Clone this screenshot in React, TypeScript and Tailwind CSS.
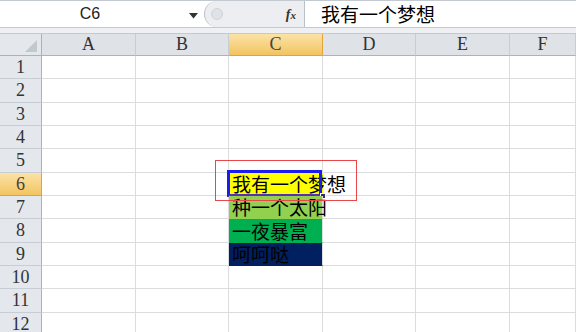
import React from "react";

const cols = ["A", "B", "C", "D", "E", "F"];
const colW = ["w-[94px]", "w-[93px]", "w-[94px]", "w-[93px]", "w-[94px]", "flex-1"];
// row heights incl. bottom gridline, screenshot was zoomed so they alternate 23/24
const rowH = [
  "h-[23px]", "h-[24px]", "h-[23px]", "h-[23px]", "h-[24px]", "h-[23px]",
  "h-[23px]", "h-[24px]", "h-[23px]", "h-[23px]", "h-[24px]", "h-[23px]",
];

const cjk = { fontFamily: '"Noto Sans CJK SC", "Noto Sans", sans-serif' };
const head = { fontFamily: '"Liberation Serif", "DejaVu Serif", serif' };

function FormulaBar() {
  return (
    <div className="flex h-[28px] border-t border-b border-[#c3c9d1] bg-white">
      <div className="relative flex w-[204px] items-center">
        <span
          className="flex-1 text-center text-[16px] text-[#222] pr-[24px]"
          style={{ fontFamily: '"Liberation Sans", Arial, sans-serif' }}
        >
          C6
        </span>
        <svg width="9" height="6" viewBox="0 0 9 6" className="absolute right-[6px] top-[12px]">
          <path d="M0 0 H9 L4.5 5.5 Z" fill="#333" />
        </svg>
      </div>
      <div className="flex w-[101px] items-center rounded-l-full border-l border-r border-[#b9c0c9] bg-[#eceef1]">
        <div className="ml-[6px] h-[12px] w-[12px] rounded-full border border-[#cfd4da] bg-[#dfe2e6]" />
        <span
          className="ml-auto mr-[8px] text-[14px] font-bold italic text-[#333]"
          style={{ fontFamily: '"Liberation Serif", serif' }}
        >
          f<span className="text-[11px]">x</span>
        </span>
      </div>
      <div className="flex flex-1 items-center pl-[16px] text-[19px] text-black" style={cjk}>
        我有一个梦想
      </div>
    </div>
  );
}

function HeaderRow() {
  return (
    <div className="flex h-[23px] border-t border-[#c3c9d1]">
      <div className="relative w-[42px] border-r border-b border-[#a9b3be] bg-[#e4e7eb]">
        <svg width="12" height="12" viewBox="0 0 12 12" className="absolute right-[4px] bottom-[3px]">
          <path d="M12 0 V12 H0 Z" fill="#c3c8cf" />
        </svg>
      </div>
      {cols.map((c, i) => (
        <div
          key={c}
          className={[
            colW[i],
            "flex items-center justify-center border-r border-b text-[18px]",
            c === "C"
              ? "bg-gradient-to-b from-[#fbe3a6] to-[#f2c45f] border-[#e0a43a] text-[#444]"
              : "bg-[#dfe3e8] border-[#a9b3be] border-r-[#c7cdd4] text-[#333]",
          ].join(" ")}
          style={head}
        >
          {c}
        </div>
      ))}
    </div>
  );
}

function Cell({ row, col, w }: { row: number; col: string; w: string }) {
  let bg = "bg-white";
  let text = "";
  if (col === "C") {
    if (row === 6) { bg = "bg-[#ffff00]"; text = "我有一个梦想"; }
    if (row === 7) { bg = "bg-[#92d050]"; text = "种一个太阳"; }
    if (row === 8) { bg = "bg-[#00b050]"; text = "一夜暴富"; }
    if (row === 9) { bg = "bg-[#002060]"; text = "呵呵哒"; }
  }
  // overflowing text hides the gridline to the right
  const hideRight = col === "C" && row === 6;
  const filled = col === "C" && row >= 6 && row <= 9;
  return (
    <div
      className={[
        w,
        bg,
        "relative border-b",
        hideRight ? "" : "border-r",
        filled ? "z-10 border-b-transparent border-r-[#dadcde]" : "border-[#dadcde]",
      ].join(" ")}
    >
      {text && (
        <span
          className="absolute left-[3px] bottom-[1px] whitespace-nowrap text-[19px] leading-[20px] text-black"
          style={cjk}
        >
          {text}
        </span>
      )}
      {row === 6 && col === "C" && (
        <>
          <div className="absolute left-[-2px] top-[-3px] h-[27px] w-[95px] border-[3px] border-[#1c1cf0] border-b-[#5a2fb0]" />
          <div className="absolute right-[-3px] bottom-[-4px] h-[6px] w-[6px] border border-white bg-[#3a2a7a]" />
        </>
      )}
    </div>
  );
}

function GridRow({ n }: { n: number }) {
  const sel = n === 6;
  return (
    <div className={["flex", rowH[n - 1]].join(" ")}>
      <div
        className={[
          "flex w-[42px] items-center justify-center border-r border-b text-[18px]",
          sel
            ? "bg-gradient-to-b from-[#fbe3a6] to-[#f2c45f] border-[#e0a43a] text-[#444]"
            : "bg-[#e4e7eb] border-[#a9b3be] border-b-[#c7cdd4] text-[#333]",
        ].join(" ")}
        style={head}
      >
        {n}
      </div>
      {cols.map((c, i) => (
        <Cell key={c} row={n} col={c} w={colW[i]} />
      ))}
    </div>
  );
}

export default function App() {
  return (
    <div className="relative h-[332px] w-[576px] overflow-hidden bg-white">
      <FormulaBar />
      <div className="h-[5px] bg-[#eef0f3]" />
      <HeaderRow />
      {Array.from({ length: 12 }, (_, i) => (
        <GridRow key={i} n={i + 1} />
      ))}
      {/* red annotation box drawn over the sheet */}
      <div className="absolute left-[215px] top-[160px] z-20 h-[41px] w-[142px] border border-[#e8474a]" />
    </div>
  );
}
